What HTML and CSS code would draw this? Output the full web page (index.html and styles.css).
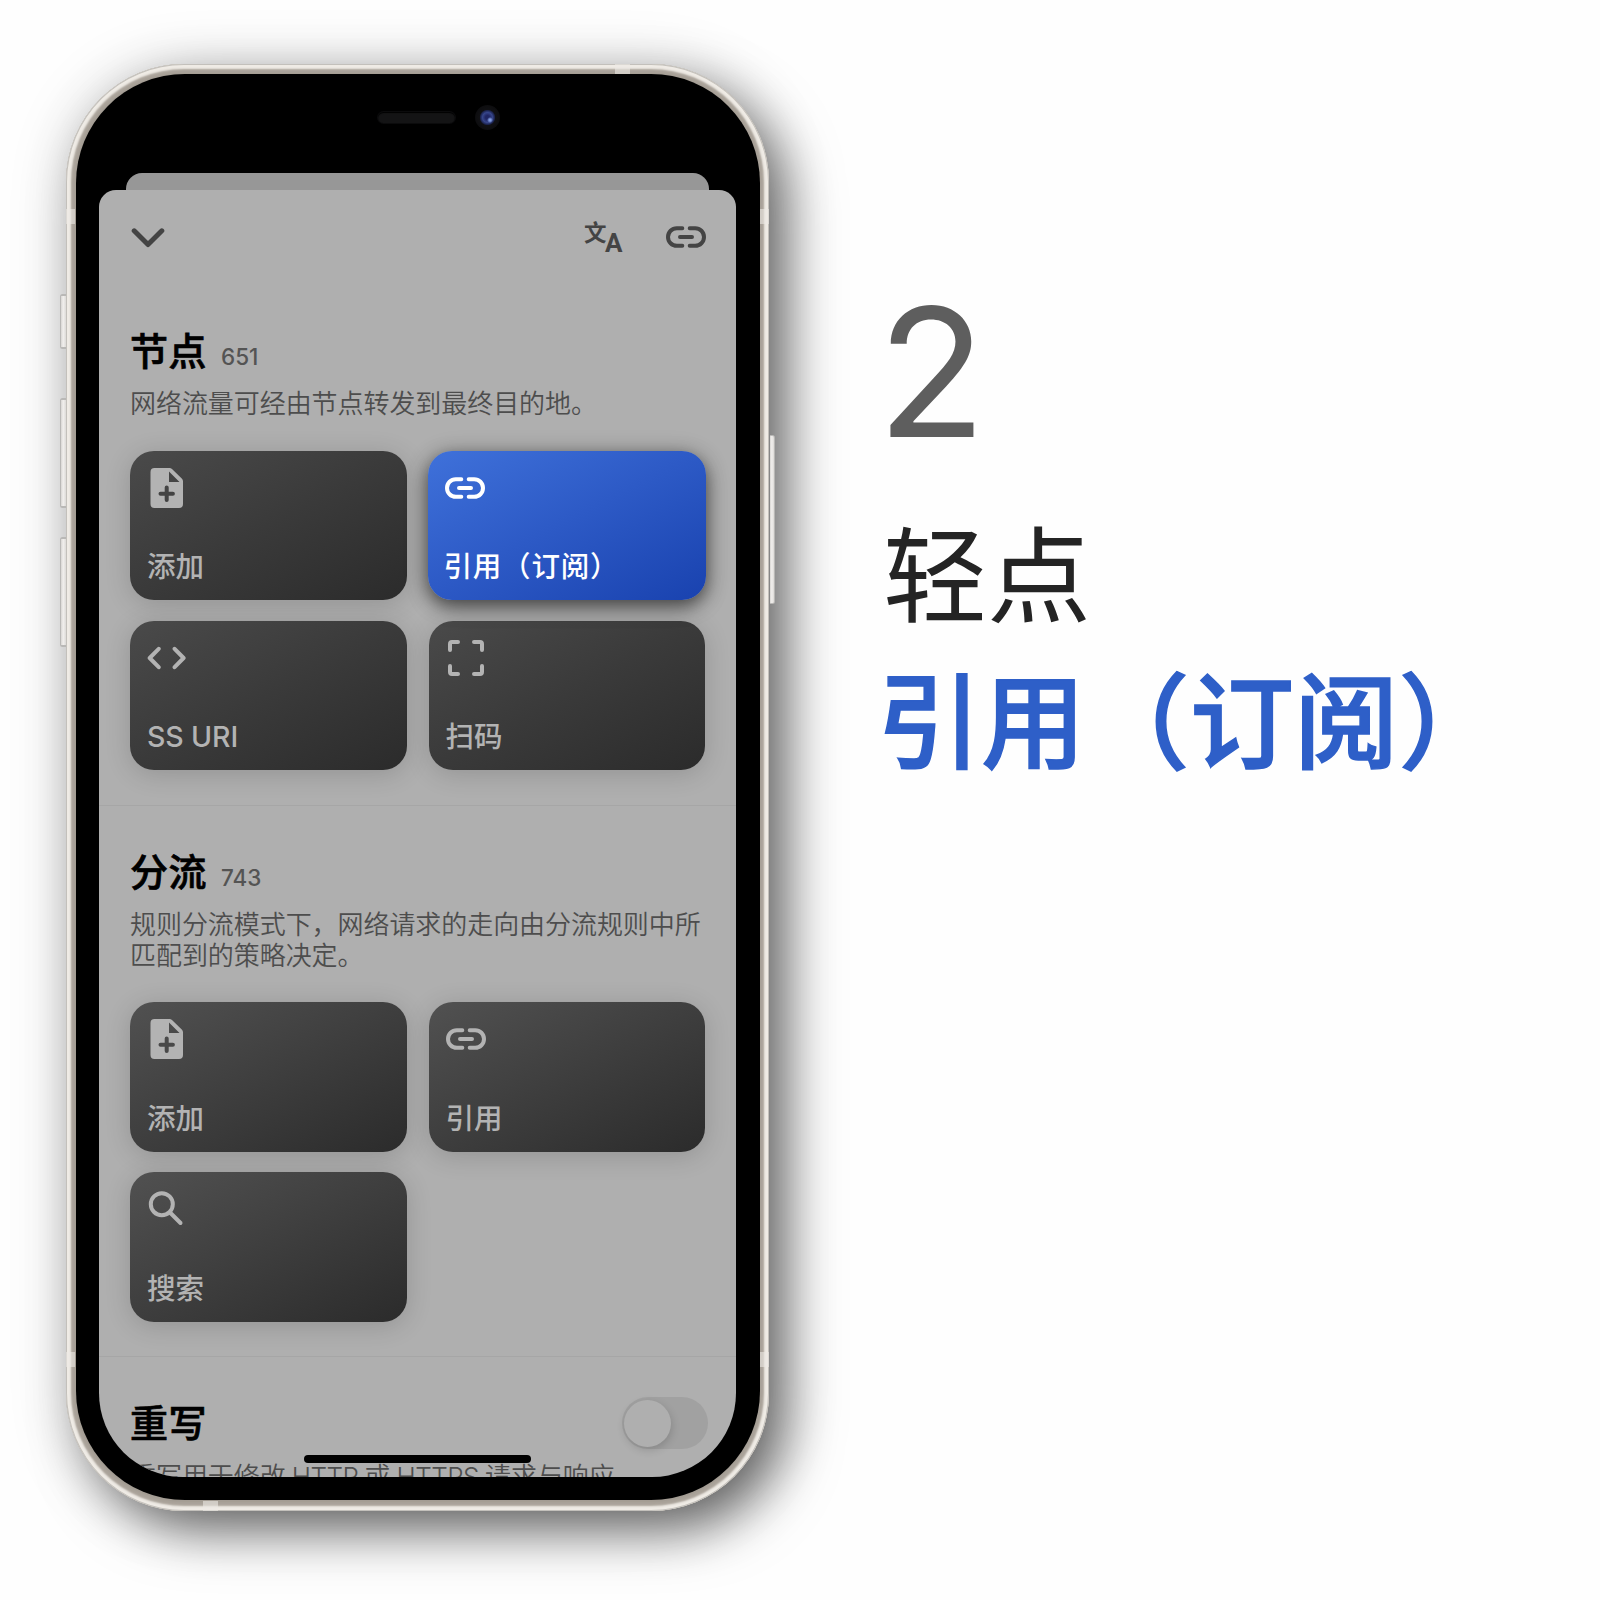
FILE: index.html
```
<!DOCTYPE html>
<html lang="zh-CN">
<head>
<meta charset="utf-8">
<title>引用（订阅）</title>
<link rel="stylesheet" href="styles.css">
</head>
<body>
<svg class="sprite" aria-hidden="true">
  <symbol id="i-link" viewBox="0 0 40 22">
    <g fill="none" stroke="currentColor" stroke-width="4" stroke-linecap="round">
      <path d="M16.300 2.200H10.800a8.800 8.800 0 0 0 0 17.600H16.300M23.700 2.200h5.500a8.800 8.800 0 0 1 0 17.600H23.700M14 11h12"/>
    </g>
  </symbol>
  <symbol id="i-file" viewBox="0 0 40 40">
    <path fill="currentColor" fill-rule="evenodd" d="M7.500 0H22.500a4 4 0 0 1 2.500 1L35 10.700a4 4 0 0 1 1 2.600V36a4 4 0 0 1-4 4H7.500a4 4 0 0 1-4-4V4a4 4 0 0 1 4-4ZM22 3.500V14H32.500ZM19.700 17.500a2 2 0 0 0-2 2v4.200h-4.200a2 2 0 0 0 0 4h4.200v4.200a2 2 0 0 0 4 0v-4.200h4.200a2 2 0 0 0 0-4h-4.200v-4.200a2 2 0 0 0-2-2Z"/>
  </symbol>
  <symbol id="i-code" viewBox="0 0 40 40">
    <path fill="none" stroke="currentColor" stroke-width="4" stroke-linecap="round" stroke-linejoin="round" d="M11.700 10.800 2.700 20 11.700 29.200M27.600 10.800 36.600 20 27.600 29.200"/>
  </symbol>
  <symbol id="i-scan" viewBox="0 0 40 40">
    <path fill="none" stroke="currentColor" stroke-width="4" stroke-linecap="round" d="M4 12V6a2 2 0 0 1 2-2h6M28 4h6a2 2 0 0 1 2 2v6M36 28v6a2 2 0 0 1-2 2h-6M12 36H6a2 2 0 0 1-2-2v-6"/>
  </symbol>
  <symbol id="i-search" viewBox="0 0 40 40">
    <g fill="none" stroke="currentColor" stroke-width="4"><circle cx="14.800" cy="15.200" r="11"/><path stroke-linecap="round" d="M23.500 24 33.500 34"/></g>
  </symbol>
</svg>

<main class="page">
  <div class="phone">
    <div class="frame">
      <i class="band l1"></i><i class="band l2"></i><i class="band r1"></i><i class="band r2"></i><i class="band t1"></i><i class="band b1"></i>
      <div class="bezel">
        <div class="sensors"><i class="speaker"></i><i class="camera"></i></div>
        <div class="back-sheet"></div>
        <div class="sheet">
          <header class="bar">
            <svg class="chevron" viewBox="0 0 34 20"><path d="M3.200 2.800 17 16.500 30.800 2.800"/></svg>
            <span class="spacer"></span>
            <span class="lang"><b class="zh">文</b><b class="en">A</b></span>
            <svg class="link"><use href="#i-link"/></svg>
          </header>

          <section class="group first">
            <h2>节点<small>651</small></h2>
            <p>网络流量可经由节点转发到最终目的地。</p>
            <div class="cards">
              <div class="card"><svg><use href="#i-file"/></svg><span>添加</span></div>
              <div class="card active"><svg><use href="#i-link"/></svg><span>引用（订阅）</span></div>
              <div class="card"><svg><use href="#i-code"/></svg><span>SS URI</span></div>
              <div class="card"><svg><use href="#i-scan"/></svg><span>扫码</span></div>
            </div>
          </section>

          <section class="group second">
            <h2>分流<small>743</small></h2>
            <p>规则分流模式下，网络请求的走向由分流规则中所<br>匹配到的策略决定。</p>
            <div class="cards">
              <div class="card"><svg><use href="#i-file"/></svg><span>添加</span></div>
              <div class="card"><svg><use href="#i-link"/></svg><span>引用</span></div>
              <div class="card"><svg><use href="#i-search"/></svg><span>搜索</span></div>
            </div>
          </section>

          <section class="group third">
            <h2>重写</h2>
            <i class="switch"></i>
            <p>重写用于修改 <span>HTTP</span> 或 <span>HTTPS</span> 请求与响应</p>
          </section>
          <i class="home"></i>
        </div>
      </div>
    </div>
    <i class="key mute"></i><i class="key vol-up"></i><i class="key vol-down"></i><i class="key power"></i>
  </div>

  <div class="caption">
    <div class="step">2</div>
    <div class="verb">轻点</div>
    <div class="target">引用（订阅）</div>
  </div>
</main>
</body>
</html>
```
FILE: styles.css
```
* { box-sizing: border-box; margin: 0; padding: 0; }
body { width: 1600px; height: 1600px; overflow: hidden; background: #fefefe; font-family: Inter, "Noto Sans CJK SC", sans-serif; }
i { display: block; font-style: normal; }
.sprite { display: none; }
.page { display: flex; height: 1600px; padding: 64px 0 0 66px; }

.phone { position: relative; flex: none; width: 703px; height: 1447px; }
.frame {
  position: relative; height: 1447px; padding: 10px 9.500px 11px 9.500px; border-radius: 118px;
  background: #a39c93;
  box-shadow: inset 0 0 0 1px #c3c0bb, inset 0 0 2px 5px #efebe5, inset 0 0 2px 9px #aaa39a,
    20px 22px 54px -4px rgba(0,0,0,.58), 2px 4px 60px rgba(0,0,0,.18);
}
.key { position: absolute; width: 5.500px; border: 1px solid #b9b8b6; border-width: 2px 0 2px 1px; border-radius: 2.500px 0 0 2.500px; background: linear-gradient(90deg, #d8d6d3, #f1efed 45%, #dcdad7); }
.mute { left: -6px; top: 230px; height: 55px; }
.vol-up { left: -6px; top: 334px; height: 110px; }
.vol-down { left: -6px; top: 473px; height: 110px; }
.power { right: -6px; top: 371px; height: 169px; border-width: 1px 1px 1px 0; border-radius: 0 2.500px 2.500px 0; }
.band { position: absolute; background: rgba(236,233,228,.6); }
.l1, .l2 { left: 0; width: 9px; height: 15px; }
.r1, .r2 { right: 0; width: 9px; height: 15px; }
.l1, .r1 { top: 145px; }
.l2, .r2 { top: 1288px; }
.t1 { left: 549px; top: 0; width: 15px; height: 10px; }
.b1 { left: 137px; bottom: 0; width: 15px; height: 10px; }

.bezel { height: 1426px; padding: 30px 24px 0 23.500px; border-radius: 109px; background: #000; }
.sensors { display: flex; align-items: center; justify-content: flex-end; gap: 20px; height: 26px; padding-right: 236px; }
.speaker { width: 77px; height: 11px; border-radius: 6px; background: #141415; box-shadow: inset 0 1px 1px #000, 0 0 0 1px #0b0b0c; }
.camera { width: 25px; height: 25px; border-radius: 50%; background: radial-gradient(circle at 60% 60%, #7f9ae0 0 1px, transparent 3px), radial-gradient(circle at 50% 50%, #1f2563 0 2px, #36458a 5px, #1c2450 7px, #101013 8px, #0d0d0f 12px); }
.back-sheet { height: 17px; margin: 43px 27px 0; border-radius: 16px 16px 0 0; background: #979797; }

.sheet { position: relative; height: 1287px; overflow: hidden; border-radius: 17px 17px 84px 84px; background: #afafaf; }
.bar { display: flex; align-items: center; height: 95px; padding: 0 29.500px 0 32px; color: #444; }
.spacer { flex: 1; }
.chevron { width: 34px; height: 20px; fill: none; stroke: #444; stroke-width: 5; stroke-linecap: round; stroke-linejoin: round; }
.bar .link { width: 40px; height: 22px; margin-bottom: 1px; }
.lang { display: flex; width: 38px; height: 36px; margin-right: 44px; line-height: 20px; }
.zh { padding-top: 3px; font-size: 22.500px; }
.en { margin-left: -1.500px; padding-top: 13.500px; font-family: Roboto, sans-serif; font-size: 26px; font-weight: 700; }

.group { padding: 0 31px; }
.group + .group { border-top: 1px solid #a6a6a6; }
h2 { display: flex; align-items: baseline; height: 50px; font-size: 38px; line-height: 50px; font-weight: 500; -webkit-text-stroke: .7px #000; letter-spacing: .5px; color: #000; }
h2 small { margin-left: 14px; font-size: 22.500px; font-weight: 500; color: #545454; letter-spacing: 0; -webkit-text-stroke: 0; }
p { font-size: 26px; line-height: 30.600px; font-weight: 350; letter-spacing: -.060px; color: #4d4d4d; white-space: nowrap; word-spacing: -1.200px; }
p span { letter-spacing: -.500px; }
.first { height: 520px; padding-top: 41px; }
.first p { padding-top: 13px; margin-bottom: 31.500px; }
.second { height: 551px; padding-top: 41px; }
.second p { padding-top: 13px; margin-bottom: 31.300px; }
.cards { display: grid; grid-template-columns: 276.500px 276.500px; gap: 20.600px 22px; }
.card {
  display: flex; flex-direction: column; justify-content: space-between; height: 149.400px; padding: 17px 17px 12px; border-radius: 24px;
  background: linear-gradient(153deg, #4a4a4a, #3a3a3a 50%, #2b2b2b); color: #b3b3b3;
  box-shadow: 0 4px 26px rgba(0,0,0,.16);
}
.second .card { background: linear-gradient(153deg, #515151, #3e3e3e 50%, #2b2b2b); }
.card svg { width: 40px; height: 40px; }
.card span { font-size: 28.500px; line-height: 42px; font-weight: 500; letter-spacing: -.1px; white-space: nowrap; }
.active {
  position: relative; z-index: 1; margin: 0 -1px 0 -1px; color: #fff;
  background: linear-gradient(153deg, #3f71da, #2d5ac6 48%, #1942af);
  box-shadow: 0 6px 18px rgba(0,0,0,.55), 0 4px 26px rgba(0,0,0,.2);
}
.card.active span { margin-left: -1px; letter-spacing: .8px; }
.third { position: relative; padding-top: 41px; }
.third p { padding-top: 14px; }
.switch { position: absolute; right: 28px; top: 40px; width: 86px; height: 52px; border-radius: 26px; background: #a1a1a1; }
.switch::before { content: ""; display: block; width: 47px; height: 47px; margin: 2.500px; border-radius: 50%; background: #afafaf; box-shadow: 1px 3px 8px rgba(0,0,0,.16); }
.home { position: absolute; left: 205px; bottom: 14px; width: 227px; height: 8px; border-radius: 4px; background: #000; }

.caption { padding: 218px 0 0 108px; white-space: nowrap; }
.step { height: 180px; font-size: 179px; line-height: 180px; color: #5e5e5e; }
.verb { height: 145px; margin: 42.500px 0 0 6px; font-size: 104px; line-height: 145px; color: #242424; }
.target { height: 145px; margin-left: 0; padding-top: 1px; font-size: 104px; line-height: 145px; letter-spacing: .3px; font-weight: 500; -webkit-text-stroke: 1.500px #2e5fc8; color: #2e5fc8; }
```
